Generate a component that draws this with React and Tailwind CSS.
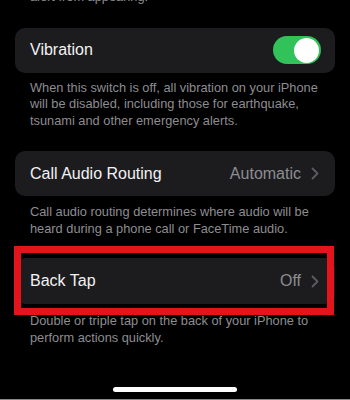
import React from 'react'

const font = { fontFamily: '"Liberation Sans", Arial, sans-serif' }

function Chevron() {
    return (
        <svg width="8" height="13" viewBox="0 0 8 13" fill="none" xmlns="http://www.w3.org/2000/svg">
            <path d="M1.5 1.5l5 5-5 5" stroke="#5c5c61" strokeWidth="1.8" strokeLinecap="round" strokeLinejoin="round" />
        </svg>
    )
}

function Note({ children, className = '' }) {
    return <p className={`pl-[15px] pr-[2px] text-[12.8px] leading-[16.5px] text-[#8d8d92] ${className}`}>{children}</p>
}

function NavRow({ label, value, className = '' }) {
    return (
        <div className={`h-[45px] rounded-[10px] bg-[#1c1c1e] flex items-center justify-between pl-[15px] pr-[16px] ${className}`}>
            <span className="text-[16px] text-[#f2f2f4]">{label}</span>
            <div className="flex items-center gap-[10px]">
                <span className="text-[16px] text-[#8d8d92]">{value}</span>
                <Chevron />
            </div>
        </div>
    )
}

export default function App() {
    return (
        <div className="h-[400px] w-[350px] bg-black overflow-hidden relative flex flex-col" style={font}>
            <div className="px-[15px]">
                <Note className="mt-[-11px]">alert from appearing.</Note>

                <div className="mt-[22px] h-[45px] rounded-[10px] bg-[#1c1c1e] flex items-center justify-between pl-[15px] pr-[14px]">
                    <span className="text-[16px] text-[#f2f2f4]">Vibration</span>
                    <div className="w-[48px] h-[28px] rounded-full bg-[#31c259] flex items-center justify-end px-[2px]">
                        <div className="w-[25px] h-[25px] rounded-full bg-white"></div>
                    </div>
                </div>
                <Note className="pt-[7px]">
                    When this switch is off, all vibration on your iPhone will be disabled, including those for earthquake, tsunami and other emergency alerts.
                </Note>

                <NavRow label="Call Audio Routing" value="Automatic" className="mt-[22px]" />
                <Note className="pt-[8px]">
                    Call audio routing determines where audio will be heard during a phone call or FaceTime audio.
                </Note>

                <div className="relative mt-[21px]">
                    <NavRow label="Back Tap" value="Off" className="h-[46px]" />
                    <div className="absolute top-[-12px] bottom-[-11px] left-[-1px] right-[1px] border-[7px] border-[#e3141b]"></div>
                </div>
                <Note className="pt-[9px]">
                    Double or triple tap on the back of your iPhone to perform actions quickly.
                </Note>
            </div>

            <div className="mt-auto flex flex-col items-center">
                <div className="w-[124px] h-[5px] rounded-full bg-white mb-[7px]"></div>
                <div className="w-full h-[1px] bg-[#8a8a8a]"></div>
            </div>
        </div>
    )
}
